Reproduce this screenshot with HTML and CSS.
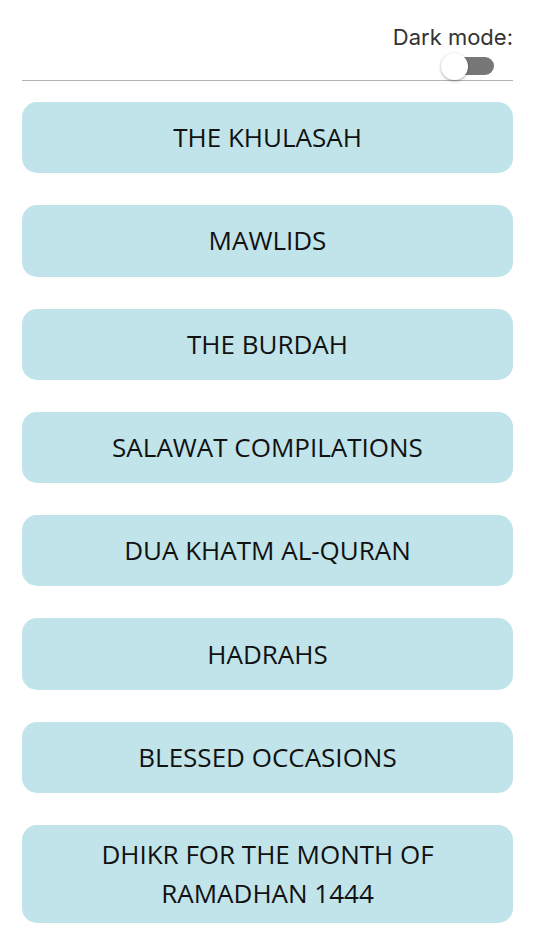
FILE: index.html
```html
<!DOCTYPE html>
<html lang="en">
<head>
    <meta charset="UTF-8">
    <meta name="viewport" content="width=device-width, initial-scale=1.0">
    <title>Collections</title>
    <link rel="stylesheet" href="styles.css">
</head>
<body>
    <header class="top-bar">
        <label class="mode-label" for="darkToggle">Dark mode:</label>
        <label class="switch">
            <input type="checkbox" id="darkToggle">
            <span class="slider"></span>
        </label>
    </header>
    <div class="menu">
        <a class="menu-item" href="#">THE KHULASAH</a>
        <a class="menu-item" href="#">MAWLIDS</a>
        <a class="menu-item" href="#">THE BURDAH</a>
        <a class="menu-item" href="#">SALAWAT COMPILATIONS</a>
        <a class="menu-item" href="#">DUA KHATM AL-QURAN</a>
        <a class="menu-item" href="#">HADRAHS</a>
        <a class="menu-item" href="#">BLESSED OCCASIONS</a>
        <a class="menu-item" href="#">DHIKR FOR THE MONTH OF RAMADHAN 1444</a>
    </div>
</body>
</html>
```

FILE: styles.css
```css
body {
    font-family: "Open Sans", Arial, sans-serif;
    background-color: #fff;
    color: #111;
    margin: 0;
    padding: 0 21px 30px 22px;
}

.top-bar {
    display: flex;
    flex-direction: column;
    align-items: flex-end;
    padding-top: 24px;
    border-bottom: 1px solid #b0b2ba;
    height: 56px;
}

.mode-label {
    font-family: Inter, "Open Sans", sans-serif;
    font-size: 22px;
    color: #333;
    line-height: 26px;
}

.switch {
    position: relative;
    display: block;
    width: 53px;
    height: 27px;
    margin-top: 3px;
    margin-right: 19px;
}

.switch input {
    display: none;
}

.slider {
    position: absolute;
    left: 12px;
    right: 0;
    top: 4px;
    height: 18px;
    background-color: #777;
    border-radius: 9px;
}

.slider::before {
    content: "";
    position: absolute;
    left: -12px;
    top: -4px;
    width: 27px;
    height: 27px;
    border-radius: 50%;
    background-color: #fff;
    box-shadow: 0 1px 3px rgba(0, 0, 0, 0.35);
}

.menu {
    display: flex;
    flex-direction: column;
    gap: 32px;
    margin-top: 21px;
}

.menu-item {
    display: flex;
    align-items: center;
    justify-content: center;
    text-align: center;
    min-height: 71.3px;
    box-sizing: border-box;
    padding: 10px 60px;
    background-color: #c1e4ea;
    border-radius: 15px;
    text-decoration: none;
    color: #111;
    font-size: 26px;
    line-height: 39px;
}
```
